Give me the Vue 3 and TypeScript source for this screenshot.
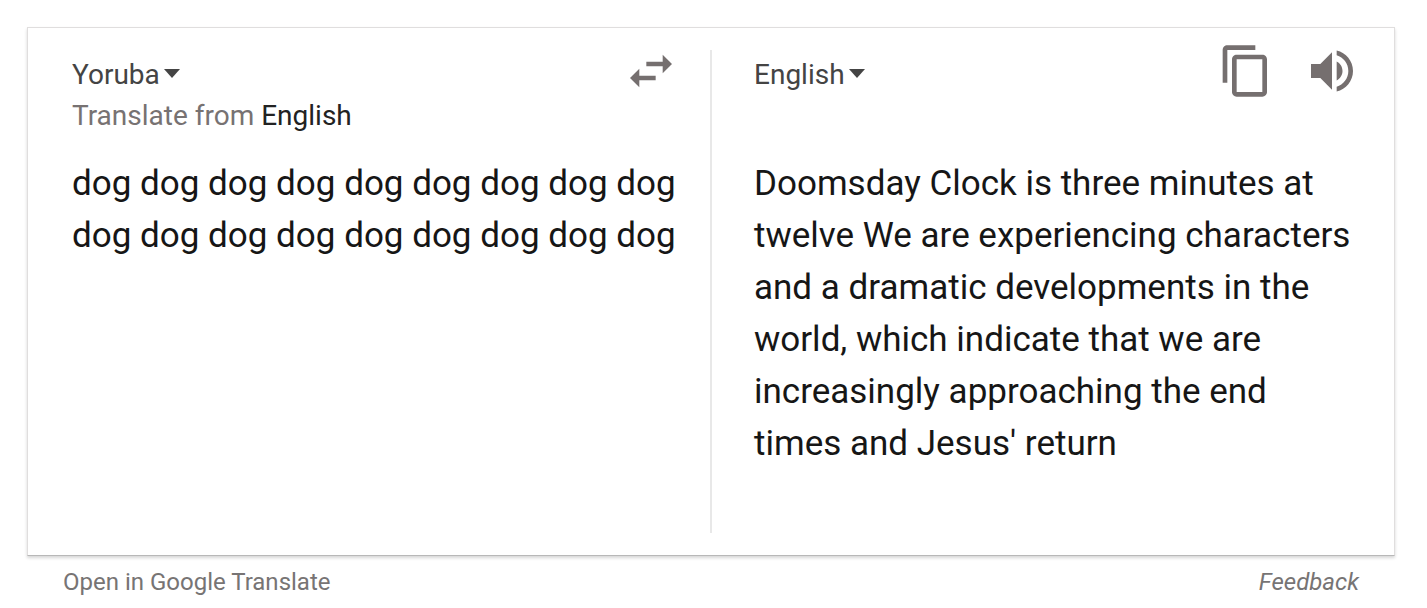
<script setup lang="ts">
import { ref } from 'vue'

const sourceLang = ref('Yoruba')
const targetLang = ref('English')
const sourceText = ref(Array(18).fill('dog').join(' '))
const translation = ref(
  "Doomsday Clock is three minutes at twelve We are experiencing characters and a dramatic developments in the world, which indicate that we are increasingly approaching the end times and Jesus' return",
)

function swapLanguages(): void {
  const previous = sourceLang.value
  sourceLang.value = targetLang.value
  targetLang.value = previous
}

function copyTranslation(): void {
  void navigator.clipboard?.writeText(translation.value)
}

function speakTranslation(): void {
  window.speechSynthesis?.speak(new SpeechSynthesisUtterance(translation.value))
}
</script>

<template>
  <main class="translator">
    <div class="card">
      <section class="panel">
        <div class="toolbar">
          <div class="languages">
            <span class="picker">
              <select v-model="sourceLang" class="select" aria-label="Source language">
                <option>Yoruba</option>
                <option>English</option>
              </select>
              <svg class="caret" viewBox="0 0 16 9" aria-hidden="true"><path d="M0 0h16L8 9z" /></svg>
            </span>
            <p class="hint">Translate from <a class="hint-link" href="#english">English</a></p>
          </div>
          <button class="icon-button" type="button" aria-label="Swap languages" @click="swapLanguages">
            <svg viewBox="0 0 24 24" aria-hidden="true">
              <path d="M6.99 11L3 15l3.99 4v-3H14v-2H6.99v-3zM21 9l-3.99-4v3H10v2h7.01v3L21 9z" />
            </svg>
          </button>
        </div>
        <textarea v-model="sourceText" class="text source" aria-label="Source text" spellcheck="false"></textarea>
      </section>
      <div class="divider"></div>
      <section class="panel target">
        <div class="toolbar">
          <div class="languages">
            <span class="picker">
              <select v-model="targetLang" class="select" aria-label="Target language">
                <option>English</option>
                <option>Yoruba</option>
              </select>
              <svg class="caret" viewBox="0 0 16 9" aria-hidden="true"><path d="M0 0h16L8 9z" /></svg>
            </span>
          </div>
          <div class="actions">
            <button class="icon-button" type="button" aria-label="Copy translation" @click="copyTranslation">
              <svg viewBox="0 0 24 24" aria-hidden="true">
                <path d="M16 1H4c-1.1 0-2 .9-2 2v14h2V3h12V1zm3 4H8c-1.1 0-2 .9-2 2v14c0 1.1.9 2 2 2h11c1.1 0 2-.9 2-2V7c0-1.1-.9-2-2-2zm0 16H8V7h11v14z" />
              </svg>
            </button>
            <button class="icon-button" type="button" aria-label="Listen to translation" @click="speakTranslation">
              <svg viewBox="0 0 24 24" aria-hidden="true">
                <path d="M3 9v6h4l5 5V4L7 9H3zm13.5 3c0-1.77-1.02-3.29-2.5-4.03v8.05c1.48-.73 2.5-2.25 2.5-4.02zM14 3.23v2.06c2.89.86 5 3.54 5 6.71s-2.11 5.85-5 6.71v2.06c4.01-.91 7-4.49 7-8.77s-2.99-7.86-7-8.77z" />
              </svg>
            </button>
          </div>
        </div>
        <p class="text">{{ translation }}</p>
      </section>
    </div>
    <footer class="footer">
      <a class="footer-link" href="#translate">Open in Google Translate</a>
      <a class="footer-link feedback" href="#feedback">Feedback</a>
    </footer>
  </main>
</template>

<style>
body {
  margin: 0;
  background: #fff;
}
</style>

<style scoped>
.translator {
  padding: 27px 32px 0 27px;
  font-family: Roboto, "Liberation Sans", sans-serif;
}

.card {
  display: grid;
  grid-template-columns: 1fr 2px 1fr;
  min-height: 529px;
  border: 1px solid #e0dede;
  border-bottom-color: #b8b8b8;
  box-shadow: 0 2px 3px rgba(0, 0, 0, 0.16);
  box-sizing: border-box;
}

.panel {
  display: flex;
  flex-direction: column;
  min-width: 0;
  padding: 15px 31px 22px 44px;
}

.target {
  padding-left: 42px;
  padding-right: 34px;
}

.divider {
  margin: 22px 0;
  background: #e8e8e8;
}

.toolbar {
  display: flex;
  justify-content: space-between;
  align-items: flex-start;
  min-height: 115px;
}

.languages {
  padding-top: 11px;
  font-size: 28px;
  line-height: 41px;
}

.picker {
  position: relative;
  display: block;
  width: fit-content;
}

.select {
  display: block;
  field-sizing: content;
  height: 41px;
  margin: 0;
  padding: 0 20px 0 0;
  border: 0;
  appearance: none;
  background: transparent;
  color: #444;
  font: inherit;
  cursor: pointer;
}

.caret {
  position: absolute;
  right: 0;
  top: 15px;
  width: 16px;
  height: 9px;
  fill: #444;
  pointer-events: none;
}

.hint {
  margin: 0;
  color: #777272;
}

.hint-link {
  color: #222;
  text-decoration: none;
}

.actions {
  display: flex;
  gap: 30px;
}

.icon-button {
  width: 56px;
  height: 56px;
  padding: 0;
  border: 0;
  background: transparent;
  cursor: pointer;
}

.icon-button svg {
  display: block;
  width: 100%;
  height: 100%;
  fill: #756f6f;
}

.text {
  margin: 0;
  color: #161616;
  font-family: inherit;
  font-size: 35px;
  line-height: 52px;
}

.source {
  display: block;
  flex: 1;
  width: 100%;
  padding: 0;
  border: 0;
  outline: 0;
  background: transparent;
  resize: none;
}

.footer {
  display: flex;
  justify-content: space-between;
  padding: 10px 36px 0;
  font-size: 24px;
  line-height: 32px;
}

.footer-link {
  color: #777474;
  text-decoration: none;
}

.feedback {
  font-style: italic;
}
</style>
